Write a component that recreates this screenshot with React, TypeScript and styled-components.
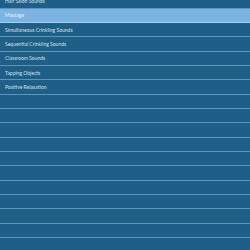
import styled, { createGlobalStyle } from "styled-components";

const GlobalStyle = createGlobalStyle`
  html, body {
    margin: 0;
    padding: 0;
    background: #1f5e86;
    overflow: hidden;
  }
`;

const Screen = styled.div`
  width: 250px;
  height: 250px;
  overflow: hidden;
  background: #1f5e86;
`;

const List = styled.ul`
  list-style: none;
  margin: -5.7px 0 0 0;
  padding: 0;
`;

const Row = styled.li<{ $selected?: boolean }>`
  display: flex;
  align-items: center;
  box-sizing: border-box;
  height: 14.333px;
  padding: 0 5px;
  border-bottom: 1px solid ${(p) => (p.$selected ? "#a9cdea" : "#5f95b8")};
  box-shadow: 0 1px 0 ${(p) => (p.$selected ? "#a9cdea" : "#2a6990")};
  background: ${(p) => (p.$selected ? "#7cb3e2" : "#1f5e86")};
  color: ${(p) => (p.$selected ? "#e3edf5" : "#d3e0ea")};
  font-family: Lato, "Open Sans", sans-serif;
  font-size: 5px;
  white-space: nowrap;
`;

const sounds = [
  "Hair Salon Sounds",
  "Massage",
  "Simultaneous Crinkling Sounds",
  "Sequential Crinkling Sounds",
  "Classroom Sounds",
  "Tapping Objects",
  "Positive Relaxation",
];

export default function App() {
  const rows = [...sounds, ...Array(13).fill("")];
  return (
    <Screen>
      <GlobalStyle />
      <List>
        {rows.map((name, i) => (
          <Row key={i} $selected={i === 1}>
            {name}
          </Row>
        ))}
      </List>
    </Screen>
  );
}
